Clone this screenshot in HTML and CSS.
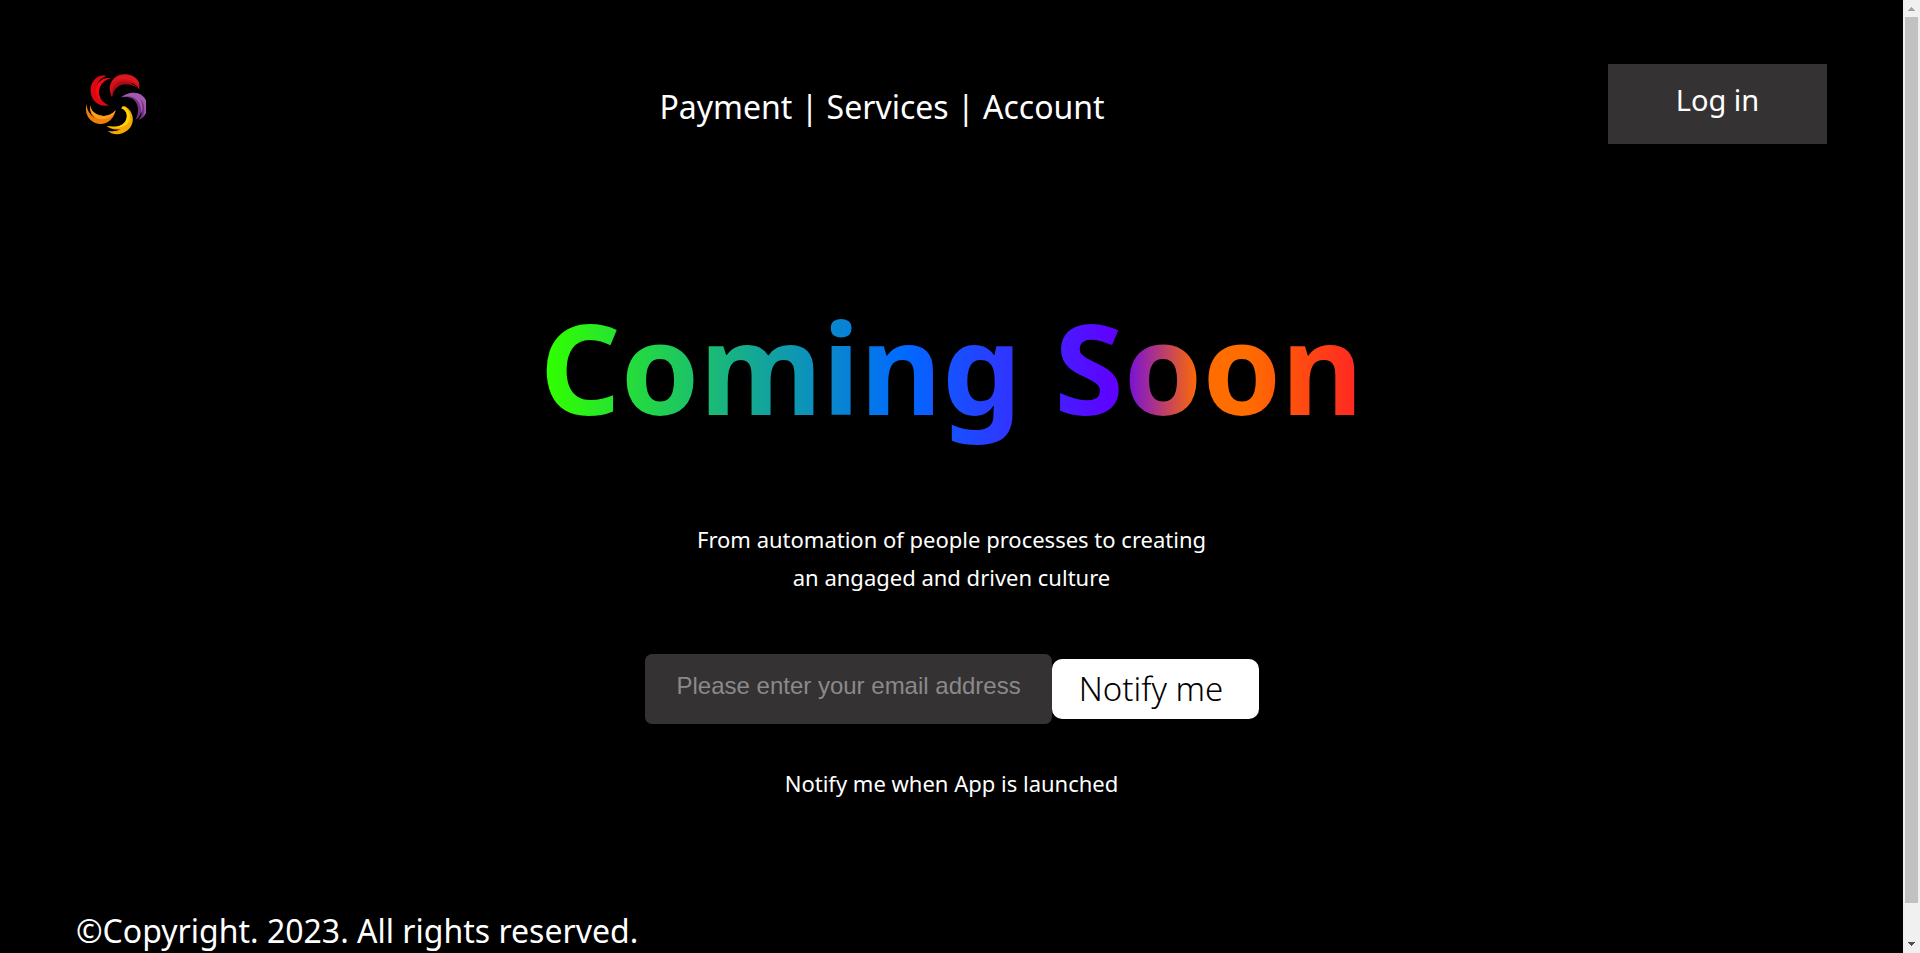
FILE: index.html
```html
<!DOCTYPE html>
<html lang="en">
<head>
<meta charset="utf-8">
<title>Coming Soon</title>
<link rel="stylesheet" href="styles.css">
</head>
<body>
<div class="page">
  <header class="header">
    <a class="logo" href="#" aria-label="Home">
      <svg viewBox="45 38 186 186" aria-hidden="true">
        <path fill="#cf1018" d="M126 111C113 85 120 60 138 49C162 35 196 43 207 66L208 88C198 71 188 68 178 67L198 78C174 66 155 66 142 76C130 85 128 98 126 111Z"/>
        <path fill="#a70d14" d="M126 111C123 88 133 69 152 64C168 60 186 67 202 82C181 70 158 68 144 79C131 88 129 99 126 111Z"/>
        <path fill="#d9191f" d="M124 72C137 42 169 36 190 49C200 54 207 66 209 79C193 59 164 51 141 61C132 64 127 71 124 72Z"/>
        <path fill="#df0713" d="M110 47C81 40 61 65 62 91C63 122 88 141 118 135C98 130 86 113 87 93C88 72 103 58 123 53C105 51 88 61 80 77C84 62 95 51 110 47Z"/>
        <path fill="#fa0718" d="M80 77C72 103 88 130 118 135C98 132 85 113 87 93C88 73 104 58 123 53C103 51 86 61 80 77Z"/>
        <path fill="#ed7f0c" d="M50 131C43 153 52 176 74 187C101 199 131 183 137 150C122 167 99 172 79 161C67 155 61 145 62 134C57 150 64 164 75 174C61 164 50 150 50 131Z"/>
        <path fill="#ff9e18" d="M62 134C56 162 78 178 98 177C119 176 133 164 137 150C121 168 99 171 79 161C67 155 61 146 62 134Z"/>
        <path fill="#f6a903" d="M162 137C179 143 191 163 188 183C184 211 153 229 124 219L113 211C130 215 143 212 151 206C136 210 121 206 110 197C131 201 151 200 163 187C176 173 172 150 154 144Z"/>
        <path fill="#ffd408" d="M158 138C175 145 184 165 178 182C169 202 139 208 110 197C132 202 151 200 163 187C176 173 172 149 154 144Z"/>
        <path fill="#713382" d="M154 111C181 89 217 94 228 121V159C222 171 214 176 206 178C214 168 217 158 215 148C213 160 208 171 196 179C205 163 207 146 200 130C192 112 174 107 154 111Z"/>
        <path fill="#a25ab0" d="M154 111C181 89 217 94 228 121V156L219 171C226 151 224 130 212 116C219 136 218 151 214 160C216 124 192 99 154 111Z"/>
      </svg>
    </a>
    <nav class="nav" aria-label="Main">
      <a href="#">Payment</a> | <a href="#">Services</a> | <a href="#">Account</a>
    </nav>
    <button class="login" type="button">Log in</button>
  </header>
  <main class="main">
    <h1 class="title">Coming Soon</h1>
    <p class="intro">From automation of people processes to creating<br>an angaged and driven culture</p>
    <form class="signup">
      <input class="email" type="email" placeholder="Please enter your email address" aria-label="Email address">
      <button class="notify" type="button">Notify me</button>
    </form>
    <p class="note">Notify me when App is launched</p>
  </main>
  <footer class="footer">©Copyright. 2023. All rights reserved.</footer>
</div>
<div class="scrollbar" aria-hidden="true">
  <svg class="arrow" viewBox="0 0 17 17"><path fill="#a3a3a3" d="M8 7h1v1h1v1h1v1h1v1H5v-1h1V9h1V8h1z"/></svg>
  <div class="thumb"></div>
  <svg class="arrow" viewBox="0 0 17 17"><path fill="#505050" d="M5 6h7v1h-1v1h-1v1H9v1H8V9H7V8H6V7H5z"/></svg>
</div>
</body>
</html>
```
FILE: styles.css
```css
* { box-sizing: border-box; }

body {
  margin: 0;
  height: 100vh;
  display: flex;
  overflow: hidden;
  background: #000;
  color: #fff;
  font-family: "Noto Sans", "Open Sans", sans-serif;
}

.page {
  flex: 1;
  padding: 64px 76px 0;
}

.header {
  display: flex;
  justify-content: space-between;
  align-items: center;
}

.logo {
  width: 80px;
  padding: 0 9px;
}

.logo svg {
  display: block;
  width: 62px;
  height: 62px;
}

.nav {
  padding-top: 6px;
  font-size: 32px;
  line-height: 48px;
}

.nav a {
  color: inherit;
  text-decoration: none;
}

.login {
  width: 219px;
  height: 80px;
  padding: 0 0 10px;
  border: 0;
  background: #353233;
  color: #fff;
  font-family: inherit;
  font-size: 29px;
}

.main {
  display: flex;
  flex-direction: column;
  align-items: center;
  text-align: center;
}

.title {
  margin: 134px 0 0;
  font-size: 126px;
  line-height: 176px;
  font-weight: 700;
  background: linear-gradient(90deg, #30ff00 1%, #006aff 44%, #6000ff 70%, #ff6c00 80%, #ff6c00 86%, #ff2424 100%);
  -webkit-background-clip: text;
  background-clip: text;
  color: transparent;
}

.intro {
  margin: 66px 0 0;
  font-size: 22px;
  line-height: 38px;
}

.signup {
  display: flex;
  align-items: center;
  margin: 58px 0 0;
}

.email {
  width: 407px;
  height: 70px;
  padding: 0 0 6px 32px;
  border: 0;
  border-radius: 7px;
  background: #353233;
  color: #fff;
  font-family: "Liberation Sans", Arial, sans-serif;
  font-size: 24px;
}

.email::placeholder { color: #8a8a8a; }

.notify {
  width: 207px;
  height: 60px;
  padding: 0 8px 2px 0;
  border: 0;
  border-radius: 10px;
  background: #fff;
  color: #000;
  font-family: inherit;
  font-size: 33px;
  font-weight: 300;
}

.note {
  margin: 40px 0 0;
  font-size: 22px;
  line-height: 38px;
}

.footer {
  margin-top: 105px;
  font-size: 32px;
  line-height: 48px;
}

.scrollbar {
  width: 17px;
  display: flex;
  flex-direction: column;
  align-items: center;
  background: #f0f0f0;
}

.arrow {
  width: 17px;
  height: 17px;
}

.thumb {
  width: 13px;
  height: 93%;
  margin-bottom: auto;
  background: #c1c1c1;
}
```
